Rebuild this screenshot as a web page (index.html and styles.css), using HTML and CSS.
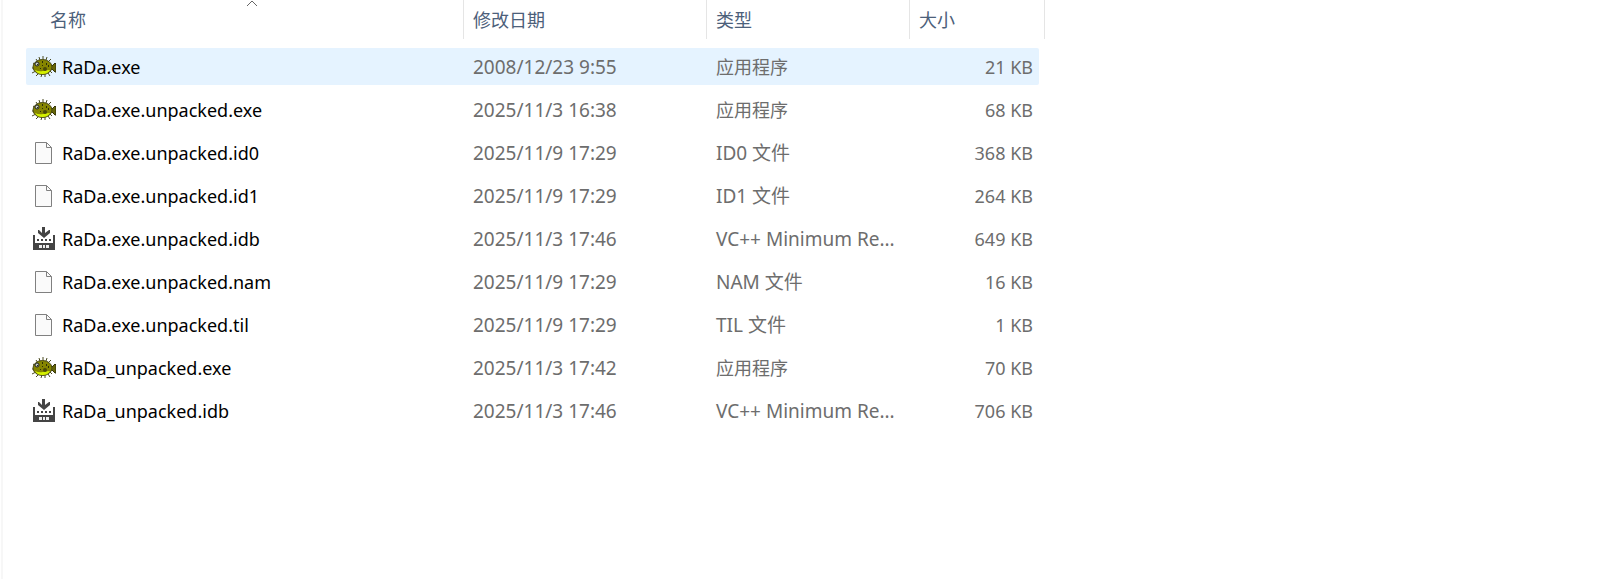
FILE: index.html
```
<!DOCTYPE html>
<html lang="zh-CN">
<head>
    <meta charset="UTF-8">
    <meta name="viewport" content="width=device-width, initial-scale=1.0">
    <title>RaDa</title>
    <link rel="stylesheet" href="styles.css">
</head>
<body>
    <svg class="sprites" aria-hidden="true">
        <symbol id="fish" viewBox="0 0 24 24">
            <path d="M4 4l2 3M7 2l1 3M11 1v4M15 2l-1 3M19 4l-3 3M1 8l3 2M0 13h3M0 18l4-2M4 21l3-3M9 22l1-3M13 22v-3M18 21l-2-3M20 18l-2-2" fill="none" stroke="#4a4a20" stroke-width="1"/>
            <path d="M18 10l2 1 3-3 1 1v8h-1l-3-3-2 1z" fill="#66660a" stroke="#33330a" stroke-width="1"/>
            <ellipse cx="10.500" cy="12" rx="9.500" ry="7.500" fill="#858500" stroke="#4a4a14" stroke-width="1"/>
            <path d="M3 15q4 2 8 1t7-1q-2 4-7.500 4T3 15z" fill="#d4f000"/>
            <circle cx="5" cy="9" r="2" fill="#c4cec4" stroke="#222" stroke-width="1"/>
            <path d="M5 9h1v1H5zM10 6h1v2h-1zM14 8h1v2h-1zM16 10h1v2h-1zM10 10h1v1h-1zM8 13h1v1H8z" fill="#2c2c08"/>
            <circle cx="13" cy="14" r="2" fill="#4a4a08"/>
        </symbol>
        <symbol id="file" viewBox="0 0 24 24">
            <path d="M3.500 1.500h11l5 5v16h-16z" fill="#fafafa" stroke="#808080"/>
            <path d="M14.500 1.500v5h5" fill="none" stroke="#808080"/>
        </symbol>
        <symbol id="idb" viewBox="0 0 24 24">
            <path d="M10 0h3v6l4-3h1v3l-6 5-6-5V3h1l3 3z" fill="#444"/>
            <path d="M1 8h2v8h18V8h2v15H1z" fill="#444"/>
            <path d="M5 12h2v2H5zM9 12h2v2H9zM13 12h2v2h-2zM17 12h2v2h-2z" fill="#444"/>
            <path d="M7 18h3v3H7zM11 18h2v3h-2zM14 18h3v3h-3z" fill="#eee"/>
        </symbol>
    </svg>
    <main class="pane">
        <table class="files">
            <colgroup>
                <col class="col-name">
                <col class="col-date">
                <col class="col-type">
                <col class="col-size">
                <col class="col-end">
            </colgroup>
            <thead>
                <tr>
                    <th class="first" aria-sort="ascending">
                        <button type="button">名称
                            <svg class="sort" viewBox="0 0 12 7" aria-hidden="true"><path d="M1 6l5-5 5 5" fill="none" stroke="#666"/></svg>
                        </button>
                    </th>
                    <th><button type="button">修改日期</button></th>
                    <th><button type="button">类型</button></th>
                    <th colspan="2"><button type="button">大小</button></th>
                </tr>
            </thead>
            <tbody>
                <tr class="selected">
                    <td class="name"><div class="entry"><svg class="icon"><use href="#fish"/></svg>RaDa.exe</div></td>
                    <td>2008/12/23 9:55</td>
                    <td class="app">应用程序</td>
                    <td class="size">21 KB</td>
                </tr>
                <tr>
                    <td class="name"><div class="entry"><svg class="icon"><use href="#fish"/></svg>RaDa.exe.unpacked.exe</div></td>
                    <td>2025/11/3 16:38</td>
                    <td class="app">应用程序</td>
                    <td class="size">68 KB</td>
                </tr>
                <tr>
                    <td class="name"><div class="entry"><svg class="icon"><use href="#file"/></svg>RaDa.exe.unpacked.id0</div></td>
                    <td>2025/11/9 17:29</td>
                    <td>ID0 文件</td>
                    <td class="size">368 KB</td>
                </tr>
                <tr>
                    <td class="name"><div class="entry"><svg class="icon"><use href="#file"/></svg>RaDa.exe.unpacked.id1</div></td>
                    <td>2025/11/9 17:29</td>
                    <td>ID1 文件</td>
                    <td class="size">264 KB</td>
                </tr>
                <tr>
                    <td class="name"><div class="entry"><svg class="icon"><use href="#idb"/></svg>RaDa.exe.unpacked.idb</div></td>
                    <td>2025/11/3 17:46</td>
                    <td>VC++ Minimum Re...</td>
                    <td class="size">649 KB</td>
                </tr>
                <tr>
                    <td class="name"><div class="entry"><svg class="icon"><use href="#file"/></svg>RaDa.exe.unpacked.nam</div></td>
                    <td>2025/11/9 17:29</td>
                    <td>NAM 文件</td>
                    <td class="size">16 KB</td>
                </tr>
                <tr>
                    <td class="name"><div class="entry"><svg class="icon"><use href="#file"/></svg>RaDa.exe.unpacked.til</div></td>
                    <td>2025/11/9 17:29</td>
                    <td>TIL 文件</td>
                    <td class="size">1 KB</td>
                </tr>
                <tr>
                    <td class="name"><div class="entry"><svg class="icon"><use href="#fish"/></svg>RaDa_unpacked.exe</div></td>
                    <td>2025/11/3 17:42</td>
                    <td class="app">应用程序</td>
                    <td class="size">70 KB</td>
                </tr>
                <tr>
                    <td class="name"><div class="entry"><svg class="icon"><use href="#idb"/></svg>RaDa_unpacked.idb</div></td>
                    <td>2025/11/3 17:46</td>
                    <td>VC++ Minimum Re...</td>
                    <td class="size">706 KB</td>
                </tr>
            </tbody>
        </table>
    </main>
</body>
</html>
```
FILE: styles.css
```
* {
    box-sizing: border-box;
}
body {
    margin: 0;
    background-color: #fff;
    color: #6d6d6d;
    font-family: "Noto Sans", "Noto Sans CJK SC", sans-serif;
    font-size: 18px;
    line-height: 24px;
}
.sprites {
    display: none;
}
.pane {
    min-height: 100vh;
    margin-left: 1px;
    padding-left: 23px;
    border-left: 2px solid #f7f7f7;
    display: flow-root;
}
.files {
    width: 100%;
    max-width: 1019px;
    margin-top: -6px;
    table-layout: fixed;
    border-collapse: separate;
    border-spacing: 0 6px;
}
.col-name {
    width: 438px;
}
.col-date {
    width: 243px;
}
.col-type {
    width: 203px;
}
.col-size {
    width: 129px;
}
.col-end {
    width: 6px;
}
th {
    padding: 0 0 3px;
    font-weight: normal;
}
th button {
    display: block;
    position: relative;
    width: 100%;
    height: 39px;
    padding: 0 9px;
    border: none;
    border-right: 1px solid #e5e5e5;
    background: none;
    color: #4c607a;
    font: inherit;
    text-align: left;
}
th.first {
    padding-left: 15px;
}
.sort {
    position: absolute;
    top: 0;
    left: 50%;
    width: 12px;
    height: 7px;
    margin-left: -6px;
}
td {
    height: 37px;
    padding: 0 9px;
    overflow: hidden;
    font-size: 19px;
    white-space: nowrap;
    text-overflow: ellipsis;
}
td.name {
    padding-left: 6px;
    color: #000;
    font-size: 18px;
    border-radius: 2px 0 0 2px;
}
td.app {
    font-size: 18px;
}
td.size {
    padding-right: 6px;
    font-size: 18px;
    text-align: right;
    border-radius: 0 2px 2px 0;
}
.selected td {
    background-color: #e5f3ff;
}
.entry {
    display: flex;
    align-items: center;
    gap: 6px;
}
.icon {
    flex: none;
    width: 24px;
    height: 24px;
}
```
